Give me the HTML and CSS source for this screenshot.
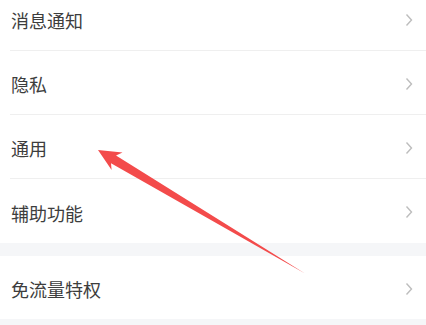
FILE: index.html
```html
<!DOCTYPE html>
<html>
<head>
<meta charset="utf-8">
<link rel="stylesheet" href="styles.css">
</head>
<body>
<div class="page">
  <div class="group">
    <div class="row"><span class="label">消息通知</span><svg class="chev" viewBox="0 0 8 14"><path d="M1.5 1.5 L6.5 7 L1.5 12.5"/></svg></div>
    <div class="row"><span class="label">隐私</span><svg class="chev" viewBox="0 0 8 14"><path d="M1.5 1.5 L6.5 7 L1.5 12.5"/></svg></div>
    <div class="row"><span class="label">通用</span><svg class="chev" viewBox="0 0 8 14"><path d="M1.5 1.5 L6.5 7 L1.5 12.5"/></svg></div>
    <div class="row last"><span class="label">辅助功能</span><svg class="chev" viewBox="0 0 8 14"><path d="M1.5 1.5 L6.5 7 L1.5 12.5"/></svg></div>
  </div>
  <div class="gap"></div>
  <div class="group">
    <div class="row single"><span class="label">免流量特权</span><svg class="chev" viewBox="0 0 8 14"><path d="M1.5 1.5 L6.5 7 L1.5 12.5"/></svg></div>
  </div>
  <div class="gap"></div>
</div>
<svg class="arrow" viewBox="0 0 426 325" width="426" height="325">
  <polygon points="98,150 122.5,152.4 116,155.6 305,273.5 111,163.2 111.6,170"/>
</svg>
</body>
</html>
```
FILE: styles.css
```css
html, body {
  margin: 0;
  padding: 0;
  background: #f5f6f8;
  overflow: hidden;
}
body {
  width: 426px;
  height: 325px;
  position: relative;
  font-family: "Noto Sans CJK SC", "Noto Sans", sans-serif;
}
.page {
  margin-top: -13px;
  display: flex;
  flex-direction: column;
}
.group {
  background: #ffffff;
  display: flex;
  flex-direction: column;
}
.row {
  height: 63px;
  margin-left: 10px;
  padding-left: 1px;
  padding-right: 13px;
  display: flex;
  align-items: center;
  justify-content: space-between;
  border-bottom: 1px solid #efefef;
}
.row.last {
  border-bottom: none;
  height: 64px;
}
.row.single {
  border-bottom: none;
  height: 63px;
}
.label {
  font-size: 18px;
  color: #3d3d3d;
  line-height: 1;
  padding-top: 3px;
}
.chev {
  width: 8px;
  height: 14px;
  fill: none;
  stroke: #bdbdbd;
  stroke-width: 1.4;
  margin-top: 2px;
}
.gap {
  height: 13px;
  background: #f5f6f8;
}
.arrow {
  position: absolute;
  left: 0;
  top: 0;
}
.arrow polygon {
  fill: #f34b4b;
}
```
